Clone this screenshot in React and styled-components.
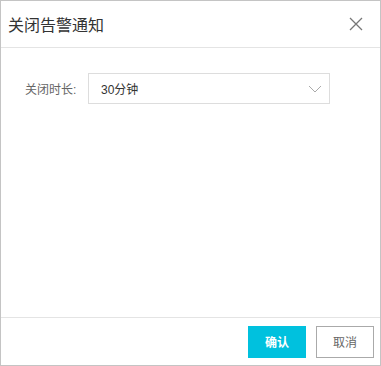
import React from 'react';
import styled, { createGlobalStyle } from 'styled-components';

const GlobalStyle = createGlobalStyle`
    html, body {
        margin: 0;
        padding: 0;
        background: #ffffff;
    }
    body {
        font-family: "Liberation Sans", Arial, "Noto Sans CJK SC", sans-serif;
    }
`;

const Dialog = styled.div`
    box-sizing: border-box;
    width: 381px;
    height: 366px;
    border: 1px solid #c4c4c4;
    background: #ffffff;
    display: flex;
    flex-direction: column;
`;

const Header = styled.div`
    height: 46px;
    border-bottom: 1px solid #e4e4e4;
    display: flex;
    align-items: center;
    justify-content: space-between;
    padding: 0 16px 0 7px;
`;

const Title = styled.h3`
    margin: 0;
    font-size: 16px;
    font-weight: normal;
    color: #333333;
`;

const CloseButton = styled.button`
    border: none;
    background: none;
    padding: 0;
    width: 16px;
    height: 16px;
    display: flex;
    align-items: center;
    justify-content: center;
    cursor: pointer;
`;

const Body = styled.div`
    flex: 1;
    padding: 25px 0 0 24px;
`;

const FormRow = styled.div`
    display: flex;
    align-items: center;
`;

const Label = styled.label`
    width: 63px;
    font-size: 12px;
    color: #666666;
`;

const SelectBox = styled.div`
    box-sizing: border-box;
    width: 242px;
    height: 31px;
    border: 1px solid #dddddd;
    display: flex;
    align-items: center;
    justify-content: space-between;
    padding: 0 7px 0 12px;
    font-size: 12px;
    color: #333333;
`;

const Footer = styled.div`
    height: 47px;
    border-top: 1px solid #e4e4e4;
    display: flex;
    justify-content: flex-end;
    align-items: center;
    gap: 10px;
    padding: 0 6px 0 0;
`;

const Button = styled.button`
    box-sizing: border-box;
    width: 58px;
    height: 32px;
    font-family: inherit;
    font-size: 12px;
    cursor: pointer;
    border: 1px solid ${p => (p.primary ? '#00c1de' : '#aaaaaa')};
    background: ${p => (p.primary ? '#00c1de' : '#ffffff')};
    color: ${p => (p.primary ? '#ffffff' : '#666666')};
    font-weight: ${p => (p.primary ? 'bold' : 'normal')};
`;

const App = () => {
    return (
        <>
            <GlobalStyle />
            <Dialog>
                <Header>
                    <Title>关闭告警通知</Title>
                    <CloseButton aria-label="close">
                        <svg width="14" height="14" viewBox="0 0 14 14">
                            <path d="M1 1L13 13M13 1L1 13" stroke="#777" strokeWidth="1.3" fill="none" />
                        </svg>
                    </CloseButton>
                </Header>
                <Body>
                    <FormRow>
                        <Label>关闭时长:</Label>
                        <SelectBox>
                            <span>30分钟</span>
                            <svg width="14" height="8" viewBox="0 0 14 8">
                                <path d="M1 1L7 7L13 1" stroke="#aaa" strokeWidth="1" fill="none" />
                            </svg>
                        </SelectBox>
                    </FormRow>
                </Body>
                <Footer>
                    <Button primary>确认</Button>
                    <Button>取消</Button>
                </Footer>
            </Dialog>
        </>
    );
};

export default App;
